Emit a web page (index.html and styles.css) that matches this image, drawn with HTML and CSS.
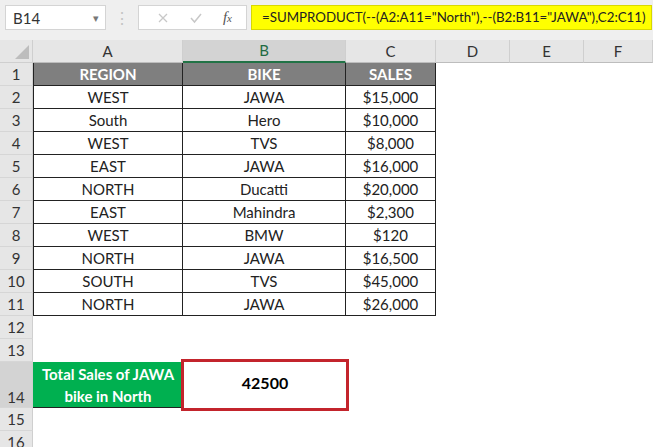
FILE: index.html
```html
<!DOCTYPE html>
<html lang="en">
<head>
  <meta charset="UTF-8">
  <title>SUMPRODUCT Example</title>
  <link rel="stylesheet" href="styles.css">
</head>
<body>

  <!-- Formula Bar -->
  <div class="formula-bar">
    <div class="name-box">
      <span>B14</span>
      <span class="drop">&#9662;</span>
    </div>
    <div class="dots">&#8942;</div>
    <div class="fx-box">
      <svg width="12" height="12" viewBox="0 0 12 12"><path d="M2 2 L10 10 M10 2 L2 10" stroke="#c8c8c8" stroke-width="1.3" fill="none"/></svg>
      <svg width="14" height="12" viewBox="0 0 14 12"><path d="M2 6 L5.5 10 L12 2" stroke="#c8c8c8" stroke-width="1.5" fill="none"/></svg>
      <span class="fx"><i>f</i><i class="x">x</i></span>
    </div>
    <div class="formula">=SUMPRODUCT(--(A2:A11="North"),--(B2:B11="JAWA"),C2:C11)</div>
  </div>

  <!-- Sheet -->
  <div class="sheet" id="sheet">
    <div class="corner"></div>
    <div class="col-head">A</div>
    <div class="col-head active">B</div>
    <div class="col-head">C</div>
    <div class="col-head">D</div>
    <div class="col-head">E</div>
    <div class="col-head">F</div>
  </div>

  <script>
    const sheet = document.getElementById('sheet');
    const data = [
      ['WEST', 'JAWA', '$15,000'],
      ['South', 'Hero', '$10,000'],
      ['WEST', 'TVS', '$8,000'],
      ['EAST', 'JAWA', '$16,000'],
      ['NORTH', 'Ducatti', '$20,000'],
      ['EAST', 'Mahindra', '$2,300'],
      ['WEST', 'BMW', '$120'],
      ['NORTH', 'JAWA', '$16,500'],
      ['SOUTH', 'TVS', '$45,000'],
      ['NORTH', 'JAWA', '$26,000']
    ];

    function cell(text, cls) {
      const d = document.createElement('div');
      d.className = 'cell' + (cls ? ' ' + cls : '');
      d.textContent = text;
      sheet.appendChild(d);
      return d;
    }

    function blanks(n) {
      for (let i = 0; i < n; i++) cell('', '');
    }

    // row 1 - table header
    cell('1', 'row-head');
    cell('REGION', 'th first');
    cell('BIKE', 'th');
    cell('SALES', 'th');
    blanks(3);

    // rows 2 - 11
    data.forEach((r, i) => {
      cell(String(i + 2), 'row-head');
      cell(r[0], 'td first');
      cell(r[1], 'td');
      cell(r[2], 'td');
      blanks(3);
    });

    // rows 12, 13
    [12, 13].forEach(n => {
      cell(String(n), 'row-head');
      blanks(6);
    });

    // row 14 - result (wrapped text, like Alt+Enter in the cell)
    cell('14', 'row-head tall active');
    cell('Total Sales of JAWA\nbike in North', 'total-label');
    cell('42500', 'total-value');
    blanks(4);

    [15, 16].forEach(n => {
      cell(String(n), 'row-head');
      blanks(6);
    });
  </script>
</body>
</html>
```

FILE: styles.css
```css
body {
  margin: 0;
  font-family: Lato, "Open Sans", sans-serif;
  background: #fff;
  overflow: hidden;
  width: 653px;
  height: 447px;
}

.formula-bar {
  height: 40px;
  background: #efefef;
  display: flex;
  align-items: flex-start;
  padding-top: 5px;
  box-sizing: border-box;
  padding-left: 5px;
}

.name-box {
  width: 101px;
  height: 25px;
  box-sizing: border-box;
  background: #fff;
  border: 1px solid #d4d4d4;
  display: flex;
  align-items: center;
  justify-content: space-between;
  padding: 0 6px 0 7px;
  font-size: 15px;
  color: #333;
}

.name-box .drop {
  font-size: 11px;
  color: #777;
}

.dots {
  width: 32px;
  text-align: center;
  color: #c4c4c4;
  font-size: 16px;
  line-height: 25px;
}

.fx-box {
  width: 109px;
  height: 25px;
  box-sizing: border-box;
  background: #fff;
  border: 1px solid #d4d4d4;
  display: flex;
  align-items: center;
  justify-content: space-around;
  padding: 0 4px 0 8px;
}

.fx {
  font-family: "Liberation Serif", serif;
  font-size: 15px;
  color: #555;
}

.fx .x {
  font-size: 11px;
}

.formula {
  margin-left: 4px;
  width: 401px;
  height: 25px;
  box-sizing: border-box;
  background: #ffff00;
  border: 1px solid #d8d800;
  font-size: 13.3px;
  line-height: 23px;
  padding-left: 10px;
  color: #222;
  white-space: nowrap;
  overflow: hidden;
}

.sheet {
  display: grid;
  grid-template-columns: 33px 150px 163px 90px 74px 74px 69px;
  grid-template-rows: 23px repeat(13, 23px) 46px 23px 23px;
  font-size: 15px;
}

.corner {
  background: #e6e6e6;
  border-right: 1px solid #cfcfcf;
  border-bottom: 1px solid #cfcfcf;
  position: relative;
  overflow: hidden;
}

.corner::after {
  content: "";
  position: absolute;
  right: 3px;
  bottom: 3px;
  border-left: 14px solid transparent;
  border-bottom: 14px solid #bdbdbd;
}

.col-head {
  background: #e6e6e6;
  border-right: 1px solid #cfcfcf;
  border-bottom: 1px solid #bdbdbd;
  text-align: center;
  line-height: 22px;
  color: #333;
}

.col-head.active {
  background: #d3d3d3;
  color: #1f6b43;
  border-bottom: 2px solid #217346;
  line-height: 21px;
}

.cell {
  text-align: center;
  line-height: 23px;
  color: #222;
  box-sizing: border-box;
}

.row-head {
  background: #e6e6e6;
  border-right: 1px solid #cfcfcf;
  border-bottom: 1px solid #d6d6d6;
  color: #333;
}

.row-head.tall {
  line-height: 20px;
  display: flex;
  align-items: flex-end;
  justify-content: center;
}

.row-head.active {
  background: #d3d3d3;
}

.th {
  background: #7f7f7f;
  color: #fff;
  font-weight: bold;
  border-right: 1px solid #222;
  border-bottom: 1px solid #222;
}

.td {
  border-right: 1px solid #222;
  border-bottom: 1px solid #222;
}

.first {
  border-left: 1px solid #222;
}

.total-label {
  background: #00b050;
  color: #fff;
  font-weight: bold;
  white-space: pre-line;
  line-height: 22px;
  padding: 1px 0 0;
  border-bottom: 1px solid #222;
}

.total-value {
  font-weight: bold;
  font-size: 16px;
  color: #000;
  line-height: 44px;
  outline: 3px solid #c3242c;
  outline-offset: -1px;
  margin: -1px -1px -1px 0;
}
```
